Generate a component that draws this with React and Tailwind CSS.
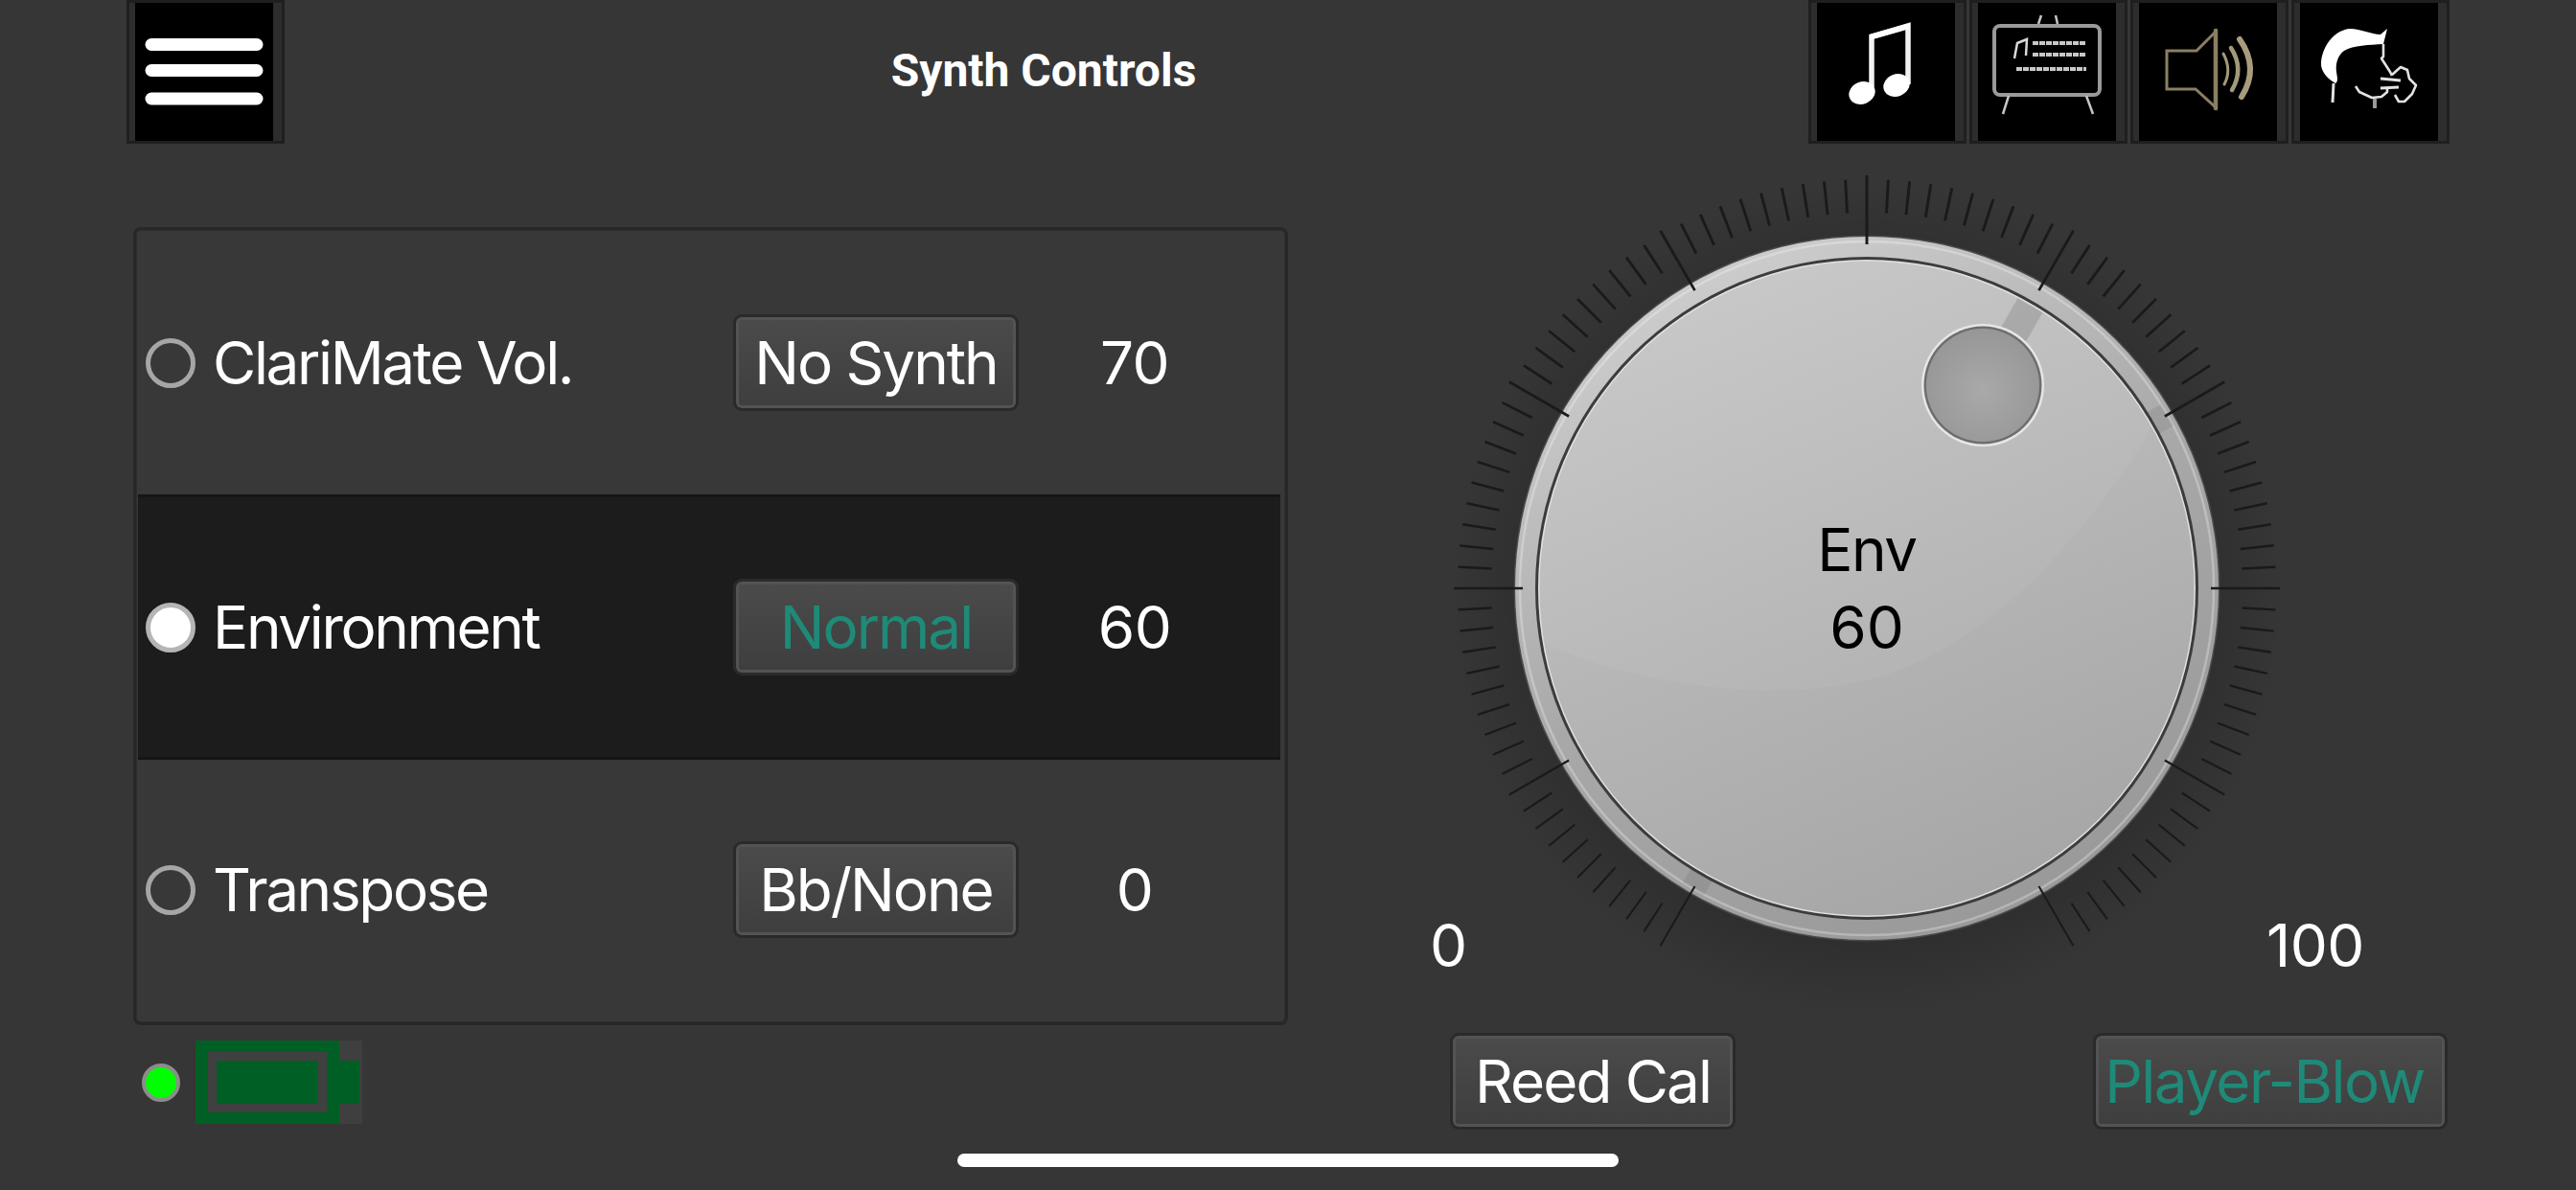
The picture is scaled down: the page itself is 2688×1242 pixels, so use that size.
import React from "react";

function IconButton({ children }) {
  return (
    <div className="flex h-[150px] w-[165px] shrink-0 border-[3px] border-[#1f1f1f] bg-[#2d2d2d] pl-[6px]">
      <svg width="144" height="144" viewBox="0 0 144 144" className="block bg-black">{children}</svg>
    </div>
  );
}

function Btn({ children, teal, className }) {
  return (
    <div className={"flex items-center justify-center rounded-[9px] border-[3px] border-[#2a2a2a] bg-linear-to-b from-[#4b4b4b] to-[#3e3e3e] shadow-[inset_0_0_0_3px_#535353] text-[62px] leading-none whitespace-nowrap " + (teal ? "text-[#1f8a78] " : "text-white ") + className}>
      {children}
    </div>
  );
}

function Row({ label, btn, value, selected, teal, h }) {
  return (
    <div className={"flex items-center pl-[8px] pr-[31px] " + h + " " + (selected ? "bg-[#1c1c1c] border-y-[3px] border-[#151515]" : "")}>
      <div className={"h-[52px] w-[52px] shrink-0 rounded-full border-[5px] " + (selected ? "border-[#b5b5b5] bg-white" : "border-[#a6a6a6]")} />
      <div className="ml-[18px] flex-1 whitespace-nowrap text-[62px] leading-none tracking-[-2.35px] text-white">{label}</div>
      <Btn teal={teal} className="h-[101px] w-[298px] tracking-[-2px]">{btn}</Btn>
      <div className="w-[242px] text-center text-[62px] leading-none tracking-[-0.5px] text-white">{value}</div>
    </div>
  );
}

function Ticks() {
  const out = [];
  for (let i = 0; i <= 100; i++) {
    const a = ((-150 + i * 3) * Math.PI) / 180;
    const major = i % 10 === 0;
    const r1 = major ? 359 : 392;
    const r2 = major ? 431 : 427;
    const s = Math.sin(a);
    const c = Math.cos(a);
    out.push(
      <line key={i} x1={r1 * s} y1={-r1 * c} x2={r2 * s} y2={-r2 * c} stroke="#1a1a1a" strokeWidth={2.9 - (1 - c) * 0.45} />
    );
  }
  return out;
}

function Knob() {
  return (
    <svg width="880" height="880" viewBox="-440 -440 880 880" className="block">
      <defs>
        <radialGradient id="halo" cx="50%" cy="50%" r="50%">
          <stop offset="0.8" stopColor="#000" stopOpacity="0.15" />
          <stop offset="1" stopColor="#000" stopOpacity="0" />
        </radialGradient>
        <linearGradient id="band" x1="0.25" y1="0" x2="0.75" y2="1">
          <stop offset="0" stopColor="#d0d0d0" />
          <stop offset="0.5" stopColor="#a8a8a8" />
          <stop offset="1" stopColor="#989898" />
        </linearGradient>
        <linearGradient id="body" x1="0.25" y1="0" x2="0.65" y2="1">
          <stop offset="0" stopColor="#c6c6c6" />
          <stop offset="1" stopColor="#a6a6a6" />
        </linearGradient>
        <radialGradient id="dot" cx="50%" cy="55%" r="55%">
          <stop offset="0" stopColor="#a9a9a9" />
          <stop offset="1" stopColor="#979797" />
        </radialGradient>
        <clipPath id="bodyClip"><circle r="343" /></clipPath>
      </defs>
      <circle r="435" cy="12" fill="url(#halo)" />
      <circle r="368.5" fill="#4a4a4a" />
      <circle r="367" fill="url(#band)" />
      <circle r="362" fill="none" stroke="#fff" strokeOpacity="0.28" strokeWidth="2.5" />
      <g fill="#000" fillOpacity="0.07">
        <rect x="-13" y="-362" width="26" height="20" transform="rotate(60)" />
        <rect x="-13" y="-362" width="26" height="20" transform="rotate(-150)" />
      </g>
      <circle r="346" fill="#3c3c3c" />
      <circle r="343" fill="#e0e0e0" />
      <circle r="341.5" fill="url(#body)" />
      <path clipPath="url(#bodyClip)" d="M-345 55C-230 105-110 115-20 100C90 82 200-10 295-164L345-350L-350-350Z" fill="#fff" fillOpacity="0.05" />
      <rect x="-15" y="-341" width="30" height="60" fill="#000" fillOpacity="0.12" transform="rotate(30)" />
      <circle cx="121" cy="-212" r="64" fill="#e6e6e6" />
      <circle cx="121" cy="-212" r="61.5" fill="#6e6e6e" />
      <circle cx="121" cy="-212" r="59" fill="url(#dot)" />
      <Ticks />
    </svg>
  );
}

export default function App() {
  return (
    <div className="flex h-[1242px] w-[2688px] flex-col overflow-hidden bg-[#363636] font-[Inter,sans-serif]">
      <header className="flex h-[150px] shrink-0 items-start pl-[132px] pr-[132px]">
        <IconButton>
          <g stroke="#fff" strokeWidth="13" strokeLinecap="round">
            <line x1="17" y1="43.5" x2="127" y2="43.5" />
            <line x1="17" y1="70.5" x2="127" y2="70.5" />
            <line x1="17" y1="100" x2="127" y2="100" />
          </g>
        </IconButton>
        <div className="flex h-[148px] flex-1 items-center justify-center pr-[6px] font-[Roboto,sans-serif] text-[48px] font-bold text-white">Synth Controls</div>
        <div className="flex gap-[3px]">
          <IconButton>
            <path d="M57 88V35L95 24V85" fill="none" stroke="#f2f2f2" strokeWidth="5.5" />
            <path d="M55 33L97 21V27L55 39Z" fill="#fff" />
            <ellipse cx="47" cy="94" rx="14" ry="11.5" transform="rotate(-22 47 94)" fill="#fff" />
            <ellipse cx="83" cy="86" rx="14" ry="11.5" transform="rotate(-22 83 86)" fill="#fff" />
          </IconButton>
          <IconButton>
            <g fill="none" stroke="#9a9a9a">
              <rect x="17" y="24" width="110" height="72" rx="6" strokeWidth="4" />
              <path d="M63 22L66 13M81 13L83 22M32 97L26 116M113 97L120 116" strokeWidth="2.5" stroke="#c4c4c4" />
              <path d="M38 58L41 42L51 38L50 55" strokeWidth="2.5" stroke="#d8d8d8" />
              <path d="M57 42H113M57 54H113M40 69H113" strokeWidth="4" stroke="#c8c8c8" strokeDasharray="6 1" />
            </g>
          </IconButton>
          <IconButton>
            <g fill="none" strokeLinecap="round">
              <path d="M29 50H60L80 30V109L59 90H29Z" stroke="#8a7f62" strokeWidth="3" />
              <path d="M80 29V110" stroke="#8a7f62" strokeWidth="4.5" />
              <path d="M88 53Q97 70 89 85" stroke="#a3987a" strokeWidth="3" />
              <path d="M96 47Q110 69 97 91" stroke="#a3987a" strokeWidth="4.5" />
              <path d="M105 38Q126 68 107 98" stroke="#a89c7d" strokeWidth="6" />
            </g>
          </IconButton>
          <IconButton>
            <path d="M22 62C24 42 38 28 52 27C64 27 74 33 84 33L91 27L87 43C72 44 56 44 46 50C39 55 37 64 38 72C39 78 40 82 37 84C30 80 21 72 22 62Z" fill="#fff" />
            <g fill="none" stroke="#e2e2e2" strokeWidth="2.6" strokeLinejoin="round">
              <path d="M35 84L34 104" strokeWidth="3" />
              <path d="M87 43L87 56L85 58L94 72L96 76" />
              <path d="M58 87L62 93L75 99L85 98L91 93L91 89" />
              <path d="M84 79L105 81M84 89L103 88" strokeWidth="3.2" />
              <path d="M96 75L105 67L112 70L114 79L121 86L117 95L109 103L103 103L99 96" />
              <path d="M78 100V110" strokeWidth="4" stroke="#9a9a9a" />
            </g>
          </IconButton>
        </div>
      </header>

      <main className="flex h-[1054px] shrink-0 items-start">
        <div className="ml-[139px] mt-[87px] w-[1205px] shrink-0">
          <div className="h-[833px] rounded-[8px] border-[3px] border-[#272727] bg-[#383838] pl-[2px] pr-[5px] pt-[1px] pb-[2px] shadow-[inset_0_0_0_1px_#2e2e2e]">
            <Row label="ClariMate Vol." btn="No Synth" value="70" h="h-[275px]" />
            <Row label="Environment" btn="Normal" value="60" teal selected h="h-[277px]" />
            <Row label="Transpose" btn="Bb/None" value="0" h="h-[271px]" />
          </div>
          <div className="mt-[16px] flex items-center pl-[9px]">
            <div className="h-[40px] w-[40px] rounded-full border-[4px] border-[#8c8c8c] bg-[#00ff00]" />
            <div className="ml-[16px] flex h-[87px] w-[174px] items-center bg-[#3f3f3f]">
              <div className="flex h-full w-[150px] items-center justify-center bg-[#005f24]">
                <div className="h-[63px] w-[124px] border-[9px] border-[#404040] bg-[#005f24]" />
              </div>
              <div className="h-[45px] w-[21px] bg-[#005f24]" />
            </div>
          </div>
        </div>
        <div className="ml-[164px] mt-[24px] flex w-[1046px] shrink-0 flex-col">
          <div className="relative h-[880px] w-[880px]">
            <Knob />
            <div className="absolute left-[-16px] top-[788px] w-[20px] text-center text-[62px] leading-[50px] text-white">0</div>
            <div className="absolute left-[857px] top-[788px] w-[80px] text-center text-[62px] leading-[50px] tracking-[-0.5px] text-white">100</div>
            <div className="absolute left-0 top-[372px] w-full text-center text-[62px] leading-[56px] tracking-[-1.5px] text-black">Env</div>
            <div className="absolute left-0 top-[453px] w-full text-center text-[62px] leading-[56px] text-black">60</div>
          </div>
          <div className="mt-[24px] ml-[5px] flex justify-between">
            <Btn className="h-[101px] w-[298px] tracking-[-2px]">Reed Cal</Btn>
            <Btn teal className="h-[101px] w-[370px] pr-[12px] tracking-[-1.5px]">Player-Blow</Btn>
          </div>
        </div>
      </main>
      <div className="mx-auto h-[14px] w-[690px] shrink-0 rounded-full bg-white" />
    </div>
  );
}
